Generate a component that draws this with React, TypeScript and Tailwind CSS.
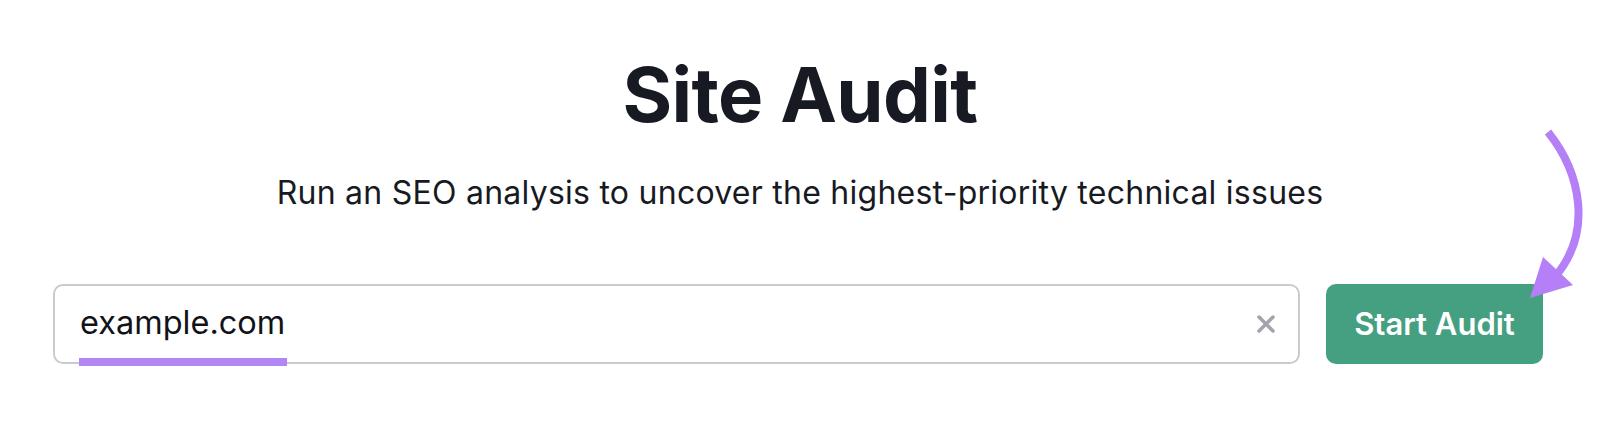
import React from "react";

export default function App() {
  return (
    <div className="relative w-[1600px] h-[442px] bg-white overflow-hidden" style={{ fontFamily: "Inter, 'Noto Sans', sans-serif" }}>
      <div className="flex flex-col items-center pt-[56px]">
        <h1 className="text-[76px] leading-[76px] font-bold text-[#171a22] tracking-[-0.6px]">Site Audit</h1>
        <p className="mt-[42px] text-[32px] leading-[38px] text-[#171a22] tracking-[0.25px]">
          Run an SEO analysis to uncover the highest-priority technical issues
        </p>
      </div>
      <div className="flex items-start gap-[26px] pl-[53px] pr-[57px] mt-[72px]">
        <div className="relative flex-1 h-[80px] rounded-[10px] border-2 border-[#c9cbd0] flex items-center pl-[25px] pr-[22px]">
          <span className="text-[32.5px] leading-[40px] text-[#111318] pb-[2px]">example.com</span>
          <div className="absolute left-[24px] top-[72px] w-[208px] h-[8px] bg-[#b286f5]" />
          <div className="ml-auto">
            <svg width="20" height="20" viewBox="0 0 20 20">
              <path d="M3 3 L17 17 M17 3 L3 17" stroke="#a1a4ab" strokeWidth="3.5" strokeLinecap="round" />
            </svg>
          </div>
        </div>
        <button className="w-[217px] h-[80px] rounded-[10px] bg-[#45a081] text-white text-[31px] font-semibold flex items-center justify-center">
          Start Audit
        </button>
      </div>
      <svg className="absolute left-[1500px] top-[110px]" width="100" height="200" viewBox="0 0 100 200">
        <path d="M48 22 C 80 62, 94 122, 54 168" fill="none" stroke="#b47ff7" strokeWidth="8" />
        <polygon points="30,188 43,147 73,175" fill="#b47ff7" />
      </svg>
    </div>
  );
}
